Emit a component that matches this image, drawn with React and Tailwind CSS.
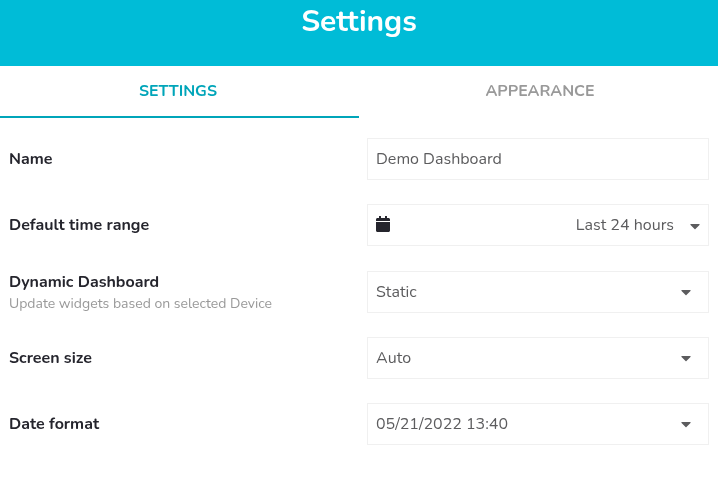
import React from 'react';

function Caret() {
  return (
    <svg className="block h-4 w-[10px] shrink-0" viewBox="0 0 320 512" fill="#5c5c5e">
      <path d="M31.3 192h257.3c17.8 0 26.700 21.500 14.100 34.100L174.100 354.800c-7.800 7.800-20.500 7.800-28.300 0L17.200 226.100C4.600 213.500 13.500 192 31.300 192z" />
    </svg>
  );
}

function CalendarIcon() {
  return (
    <svg className="mb-[2px] block h-4 w-[14px] shrink-0" viewBox="0 0 448 512" fill="#25252d">
      <path d="M0 464c0 26.500 21.500 48 48 48h352c26.500 0 48-21.500 48-48V192H0v272zM400 64h-48V12c0-6.600-5.400-12-12-12h-40c-6.600 0-12 5.400-12 12v52H160V12c0-6.600-5.400-12-12-12h-40c-6.600 0-12 5.400-12 12v52H48C21.500 64 0 85.500 0 112v48h448v-48c0-26.500-21.500-48-48-48z" />
    </svg>
  );
}

function Row({ label, hint, children, className = '' }) {
  return (
    <div className={`flex h-[42px] items-center ${className}`}>
      <div className="w-[358px] shrink-0 whitespace-nowrap text-[#25252d]">
        <div className="h-[22px] leading-[22px] font-bold">{label}</div>
        {hint && <div className="h-5 text-[14px] leading-[22px] text-[#999999]">{hint}</div>}
      </div>
      <div className="flex h-[42px] w-[342px] items-center border border-[#f0f0f0] pl-2 whitespace-nowrap text-[#5c5c5e]">
        {children}
      </div>
    </div>
  );
}

function Select({ value }) {
  return (
    <>
      <span>{value}</span>
      <span className="mr-[17px] ml-auto"><Caret /></span>
    </>
  );
}

export default function App() {
  return (
    <div className="h-[481px] w-[718px] overflow-hidden font-['Nunito','Lato',sans-serif] text-[16px] antialiased will-change-transform">
      <header className="flex h-[66px] justify-center bg-[#00bcd7]">
        <h1 className="h-11 text-[30px] leading-[44px] font-bold text-white">Settings</h1>
      </header>
      <nav className="flex h-[52px] font-bold">
        <div className="flex w-[359px] justify-center border-b-2 border-[#00a5b9] pr-[3px] leading-[50px] text-[#00a5b9]">
          SETTINGS
        </div>
        <div className="flex w-[359px] justify-center pl-[3px] leading-[50px] text-[#999999]">
          APPEARANCE
        </div>
      </nav>
      <main className="px-[9px] pt-5">
        <Row label="Name">
          <span>Demo Dashboard</span>
        </Row>
        <Row className="mt-6" label="Default time range">
          <CalendarIcon />
          <span className="ml-auto">Last 24 hours</span>
          <span className="mt-[2px] mr-[8px] ml-4"><Caret /></span>
        </Row>
        <Row className="mt-[25px]" label="Dynamic Dashboard" hint="Update widgets based on selected Device">
          <Select value="Static" />
        </Row>
        <Row className="mt-6" label="Screen size">
          <Select value="Auto" />
        </Row>
        <Row className="mt-6" label="Date format">
          <Select value="05/21/2022 13:40" />
        </Row>
      </main>
    </div>
  );
}
